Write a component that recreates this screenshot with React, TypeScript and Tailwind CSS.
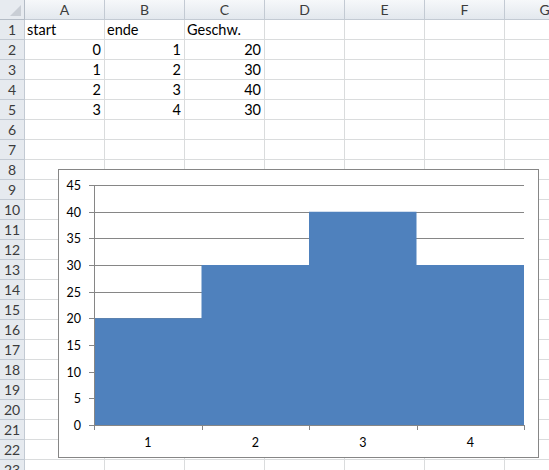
import React from 'react';

const COLS = ['A', 'B', 'C', 'D', 'E', 'F', 'G'];
const ROW_COUNT = 23;

type Cell = { v: string | number };

const data: Record<number, Cell[]> = {
  1: [{ v: 'start' }, { v: 'ende' }, { v: 'Geschw.' }],
  2: [{ v: 0 }, { v: 1 }, { v: 20 }],
  3: [{ v: 1 }, { v: 2 }, { v: 30 }],
  4: [{ v: 2 }, { v: 3 }, { v: 40 }],
  5: [{ v: 3 }, { v: 4 }, { v: 30 }],
};

const speeds = [20, 30, 40, 30];
const labelFont = "Lato, 'Open Sans', sans-serif";

function Chart() {
  // plot area inside the chart frame
  const x0 = 35;
  const x1 = 465;
  const yTop = 15;
  const yBase = 255;
  const unit = (yBase - yTop) / 45;
  const band = (x1 - x0) / speeds.length;
  const ticks = [0, 5, 10, 15, 20, 25, 30, 35, 40, 45];

  let d = `M${x0},${yBase}`;
  speeds.forEach((s, i) => {
    d += ` V${yBase - s * unit} H${x0 + band * (i + 1)}`;
  });
  d += ` V${yBase} Z`;

  return (
    <div className="absolute left-[58px] top-[169px] h-[289px] w-[481px] border border-[#868686] bg-white">
      <svg width="479" height="287" className="block">
        {ticks.map((t) => {
          const y = Math.round(yBase - t * unit);
          return (
            <g key={t}>
              <line x1={x0 - 5} x2={x1} y1={y + 0.5} y2={y + 0.5} stroke="#868686" />
              <text x={22} y={y + 4.5} textAnchor="end" fontSize="12.5" fontFamily={labelFont} fill="#000">
                {t}
              </text>
            </g>
          );
        })}
        <path d={d} fill="#4f81bd" />
        <line x1={x0 + 0.5} x2={x0 + 0.5} y1={yTop} y2={yBase + 5} stroke="#868686" />
        <line x1={x0} x2={x1} y1={yBase + 0.5} y2={yBase + 0.5} stroke="#868686" />
        {speeds.map((_, i) => (
          <line
            key={i}
            x1={Math.round(x0 + band * (i + 1)) + 0.5}
            x2={Math.round(x0 + band * (i + 1)) + 0.5}
            y1={yBase}
            y2={yBase + 5}
            stroke="#868686"
          />
        ))}
        {speeds.map((_, i) => (
          <text
            key={i}
            x={x0 + band * i + band / 2}
            y={yBase + 22}
            textAnchor="middle"
            fontSize="12.5"
            fontFamily={labelFont}
            fill="#000"
          >
            {i + 1}
          </text>
        ))}
      </svg>
    </div>
  );
}

export default function App() {
  const rows = Array.from({ length: ROW_COUNT }, (_, i) => i + 1);

  return (
    <div className="relative h-[470px] w-[549px] overflow-hidden bg-white font-['Lato','Open_Sans',sans-serif] text-[14.5px] text-black">
      <div className="grid grid-cols-[25px_repeat(7,80px)] grid-rows-[20px_repeat(23,20px)]">
        {/* corner */}
        <div className="relative border-b border-r border-[#b4bcc6] bg-[#e7ebf0]">
          <div className="absolute bottom-[3px] right-[3px] h-0 w-0 border-b-[11px] border-l-[11px] border-b-[#c9ced5] border-l-transparent" />
        </div>
        {COLS.map((c) => (
          <div
            key={c}
            className="flex items-center justify-center border-b border-r border-[#c3cad3] bg-gradient-to-b from-[#f6f8fa] to-[#e3e8ee] text-[14px] text-[#3c3c3c]"
          >
            {c}
          </div>
        ))}

        {rows.map((r) => (
          <React.Fragment key={r}>
            <div className="flex items-center justify-center border-b border-r border-[#c3cad3] bg-[#e6eaef] text-[14px] text-[#3c3c3c]">
              {r}
            </div>
            {COLS.map((c, ci) => {
              const cell = data[r]?.[ci];
              const isNum = typeof cell?.v === 'number';
              return (
                <div
                  key={c}
                  className={`flex items-end border-b border-r border-[#dadcdd] pb-[1px] leading-none ${
                    isNum ? 'justify-end pr-[3px]' : 'justify-start pl-[2px]'
                  }`}
                >
                  {cell ? <span className="pb-[1px]">{cell.v}</span> : null}
                </div>
              );
            })}
          </React.Fragment>
        ))}
      </div>
      <Chart />
    </div>
  );
}
